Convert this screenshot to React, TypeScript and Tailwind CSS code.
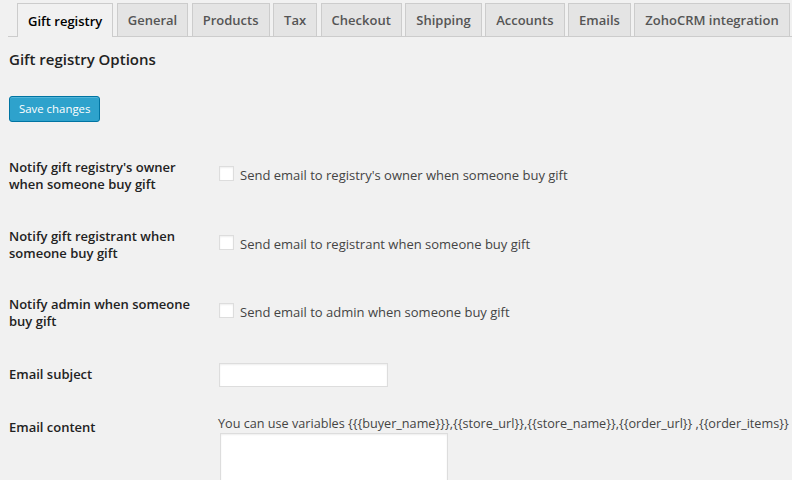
import React from 'react';

const tabs = ['Gift registry', 'General', 'Products', 'Tax', 'Checkout', 'Shipping', 'Accounts', 'Emails', 'ZohoCRM integration'];

const checkRows = [
  { label: ["Notify gift registry's owner", 'when someone buy gift'], text: "Send email to registry's owner when someone buy gift" },
  { label: ['Notify gift registrant when', 'someone buy gift'], text: 'Send email to registrant when someone buy gift' },
  { label: ['Notify admin when someone', 'buy gift'], text: 'Send email to admin when someone buy gift' },
];

function Tab({ name, active }: { name: string; active: boolean }) {
  return (
    <div
      className={
        active
          ? 'h-[34px] -mb-px pt-[2px] px-[10px] flex items-center border border-b-0 border-[#ccc] bg-[#f1f1f1] text-[#000] text-[13px] font-semibold'
          : 'h-[33px] pt-[2px] px-[10px] flex items-center border border-b-0 border-[#ccc] bg-[#e4e4e4] text-[#555] text-[13px] font-semibold'
      }
    >
      {name}
    </div>
  );
}

export default function App() {
  return (
    <div className="w-[792px] h-[480px] overflow-hidden bg-[#f1f1f1] text-[#444] text-[13px] font-['Open_Sans',sans-serif]">
      <div className="ml-[8px] pl-[9px] pt-[3px] flex items-end gap-[3.5px] border-b border-[#ccc] whitespace-nowrap">
        {tabs.map((t, i) => (
          <Tab key={t} name={t} active={i === 0} />
        ))}
      </div>

      <div className="pl-[9px]">
        <h2 className="mt-[12px] text-[15px] font-semibold text-[#222] leading-[20px]">Gift registry Options</h2>

        <button className="mt-[27px] h-[26px] px-[9px] rounded-[3px] border border-[#0074a2] bg-[#2ea2cc] text-white text-[11.4px] leading-[24px] shadow-[inset_0_1px_0_rgba(120,200,230,0.5)]">
          Save changes
        </button>

        <div className="mt-[20px]">
          {checkRows.map((r) => (
            <div key={r.text} className="h-[68.5px] flex items-center">
              <div className="w-[210px] shrink-0 text-[13px] font-semibold text-[#222] leading-[17px]">
                <div>{r.label[0]}</div>
                <div>{r.label[1]}</div>
              </div>
              <label className="flex items-start gap-[6px] -mt-[2px]">
                <span className="w-[15px] h-[15px] border border-[#ddd] bg-white shadow-[inset_0_1px_2px_rgba(0,0,0,0.07)]" />
                <span className="pt-[1px] leading-[17px]">{r.text}</span>
              </label>
            </div>
          ))}

          <div className="h-[54px] flex items-center">
            <div className="w-[210px] shrink-0 text-[13px] font-semibold text-[#222]">Email subject</div>
            <div className="w-[169px] h-[24px] border border-[#ddd] bg-white shadow-[inset_0_1px_2px_rgba(0,0,0,0.07)]" />
          </div>

          <div className="flex pt-[13px]">
            <div className="w-[210px] shrink-0 pt-[4px] text-[13px] font-semibold text-[#222] leading-[17px]">Email content</div>
            <div className="flex flex-col">
              <div className="-ml-px leading-[17px] text-[12.65px] text-[#444] whitespace-nowrap">
                {'You can use variables {{{buyer_name}}},{{store_url}},{{store_name}},{{order_url}} ,{{order_items}}'}
              </div>
              <div className="mt-[1px] ml-px w-[228px] h-[80px] border border-[#ddd] bg-white shadow-[inset_0_1px_2px_rgba(0,0,0,0.07)]" />
            </div>
          </div>
        </div>
      </div>
    </div>
  );
}
